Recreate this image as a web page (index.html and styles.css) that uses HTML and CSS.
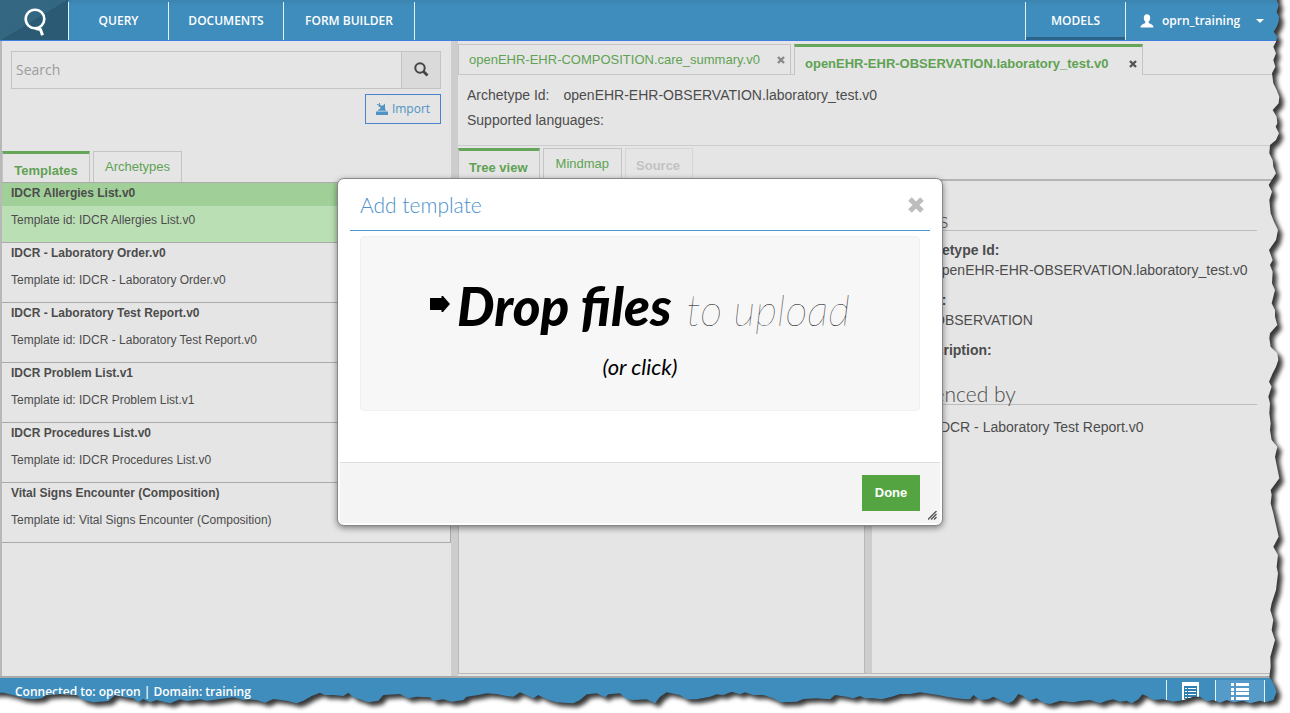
FILE: index.html
```html
<!DOCTYPE html>
<html lang="en">
<head>
<meta charset="utf-8">
<title>Models</title>
<link rel="stylesheet" href="styles.css">
</head>
<body>
<div class="app">
  <header class="topbar">
    <a class="logo" href="#" aria-label="Home">
      <svg width="24" height="30" viewBox="0 0 24 30" fill="none" stroke="#fff" stroke-width="2.6"><circle cx="12" cy="12" r="9.3"/><path d="M12.500 21.500 17.500 22.500 19.500 28.300" stroke-width="3"/></svg>
    </a>
    <nav class="nav">
      <a class="nav-item nav-query" href="#">QUERY</a>
      <a class="nav-item nav-docs" href="#">DOCUMENTS</a>
      <a class="nav-item nav-forms" href="#">FORM BUILDER</a>
    </nav>
    <a class="nav-models" href="#">MODELS</a>
    <button class="user" type="button">
      <svg width="14" height="14" viewBox="0 0 14 14" fill="#fff"><path d="M7 .3c2 0 3.200 1.400 3.200 3.400 0 1.600-.6 3-1.500 3.900v1.200c.3 1 4.800 1.500 4.800 4.700H.5c0-3.200 4.500-3.700 4.800-4.700V7.600C4.400 6.700 3.800 5.300 3.800 3.700 3.800 1.700 5 .3 7 .3z"/></svg>
      <span>oprn_training</span>
      <svg class="caret" width="8" height="4" viewBox="0 0 8 4" fill="#fff"><path d="M0 0h8L4 4z"/></svg>
    </button>
  </header>

  <main class="main">
    <section class="side">
      <form class="search">
        <input class="search-input" type="text" placeholder="Search" aria-label="Search">
        <button class="search-button" type="button" aria-label="Search">
          <svg width="15" height="15" viewBox="0 0 15 15" fill="none" stroke="#444"><circle cx="6" cy="6" r="4.700" stroke-width="2"/><path d="M9.500 9.500l4 4" stroke-width="2.800"/></svg>
        </button>
      </form>
      <button class="import" type="button">
        <svg width="12" height="12" viewBox="0 0 12 12" fill="#4e93c4"><path d="M0 8.600h12V12H0zM2 6.600h8v1.200H2zM9 .4V6.500H3L5 4.700 2.600 3.600 2.200 1.600 3.600.8 5 2.800 7 2.600z"/><path d="M1 1h1v1H1zM3 0h1v1H3z"/></svg>
        <span>Import</span>
      </button>
      <div class="tabs side-tabs">
        <button class="tab tab-active" type="button">Templates</button>
        <button class="tab" type="button">Archetypes</button>
      </div>
      <ul class="templates">
        <li class="template selected"><h3>IDCR Allergies List.v0</h3><p>Template id: IDCR Allergies List.v0</p></li>
        <li class="template"><h3>IDCR - Laboratory Order.v0</h3><p>Template id: IDCR - Laboratory Order.v0</p></li>
        <li class="template"><h3>IDCR - Laboratory Test Report.v0</h3><p>Template id: IDCR - Laboratory Test Report.v0</p></li>
        <li class="template"><h3>IDCR Problem List.v1</h3><p>Template id: IDCR Problem List.v1</p></li>
        <li class="template"><h3>IDCR Procedures List.v0</h3><p>Template id: IDCR Procedures List.v0</p></li>
        <li class="template"><h3>Vital Signs Encounter (Composition)</h3><p>Template id: Vital Signs Encounter (Composition)</p></li>
      </ul>
    </section>

    <section class="work">
      <div class="tabs doc-tabs">
        <button class="tab doc-tab" type="button"><span>openEHR-EHR-COMPOSITION.care_summary.v0</span>
          <svg class="x" width="8" height="8" viewBox="0 0 8 8" stroke="#888" stroke-width="2.400"><path d="M1 1l6 6M7 1L1 7"/></svg></button>
        <button class="tab doc-tab tab-active" type="button"><span>openEHR-EHR-OBSERVATION.laboratory_test.v0</span>
          <svg class="x" width="8" height="8" viewBox="0 0 8 8" stroke="#555" stroke-width="2.400"><path d="M1 1l6 6M7 1L1 7"/></svg></button>
      </div>
      <dl class="info">
        <div><dt>Archetype Id:</dt><dd>openEHR-EHR-OBSERVATION.laboratory_test.v0</dd></div>
        <div><dt>Supported languages:</dt><dd></dd></div>
      </dl>
      <div class="tabs view-tabs">
        <button class="tab tab-active" type="button">Tree view</button>
        <button class="tab" type="button">Mindmap</button>
        <button class="tab tab-disabled" type="button" disabled>Source</button>
      </div>
      <div class="panes">
        <div class="tree"></div>
        <div class="details">
          <h2>Details</h2>
          <dl>
            <dt>Archetype Id:</dt><dd>openEHR-EHR-OBSERVATION.laboratory_test.v0</dd>
            <dt>Type:</dt><dd>OBSERVATION</dd>
            <dt>Description:</dt>
          </dl>
          <h2>Referenced by</h2>
          <p class="reference">IDCR - Laboratory Test Report.v0</p>
        </div>
      </div>
    </section>
  </main>

  <footer class="status">
    <span class="status-text">Connected to: operon | Domain: training</span>
    <button class="status-button" type="button" aria-label="Form view">
      <svg width="18" height="20" viewBox="0 0 18 20"><path fill="#fff" d="M0 0h17v19H0z"/><path fill="#2f7fae" d="M2 4h13v13H2z"/><path fill="#fff" d="M3 6h2v1H3zm3 0h8v1H6zM3 9h2v1H3zm3 0h8v1H6zM3 12h2v1H3zm3 0h8v1H6zM3 15h2v1H3zm3 0h8v1H6z"/></svg>
    </button>
    <button class="status-button status-on" type="button" aria-label="List view">
      <svg width="18" height="20" viewBox="0 0 18 20" fill="#fff"><path d="M0 1h3v3H0zm5 0h13v3H5zM0 6h3v3H0zm5 0h13v3H5zM0 10h3v3H0zm5 0h13v3H5zM0 15h3v3H0zm5 0h13v3H5z"/></svg>
    </button>
  </footer>

  <div class="overlay">
    <div class="modal" role="dialog" aria-labelledby="modal-title">
      <div class="modal-head">
        <h1 id="modal-title">Add template</h1>
        <button class="close" type="button" aria-label="Close">
          <svg width="16" height="16" viewBox="0 0 16 16" stroke="#bdbdbd" stroke-width="5"><path d="M2 2l12 12M14 2L2 14"/></svg>
        </button>
      </div>
      <button class="dropzone" type="button">
        <span class="drop-line">
          <svg class="arrow" width="20" height="16" viewBox="0 0 20 16"><path d="M0 2h11.500V0h1.500l7 8-7 8h-1.500v-2H0z"/></svg>
          <span class="drop-strong">Drop files</span>
          <span class="drop-thin">to upload</span>
        </span>
        <span class="drop-click">(or click)</span>
      </button>
      <div class="modal-foot">
        <button class="done" type="button">Done</button>
        <svg class="grip" width="9" height="9" viewBox="0 0 9 9" stroke="#555" stroke-width="1.400"><path d="M0 8.500L8.500 0M3 8.500L8.500 3M6 8.500L8.500 6"/></svg>
      </div>
    </div>
  </div>

  <svg class="torn" viewBox="0 0 3870 2139" preserveAspectRatio="none" aria-hidden="true">
    <defs>
      <path id="sheet" d="M-100-100L3830-100 3830 0 3836 15 3830 35 3837 50 3836 65 3830 80 3821 95 3832 110 3828 125 3820 140 3828 160 3820 180 3826 200 3816 220 3820 250 3830 270 3838 290 3836 310 3818 330 3830 350 3832 370 3827 380 3837 400 3828 420 3810 435 3808 460 3818 480 3820 500 3828 520 3815 540 3806 555 3816 575 3808 600 3812 640 3822 665 3834 690 3828 720 3807 750 3818 780 3810 795 3818 815 3816 850 3825 870 3815 910 3825 930 3825 950 3832 975 3810 1000 3808 1015 3812 1040 3832 1060 3835 1080 3828 1100 3818 1120 3807 1145 3815 1160 3805 1190 3810 1210 3808 1240 3812 1270 3810 1290 3815 1320 3832 1340 3825 1370 3830 1395 3838 1435 3812 1470 3815 1485 3812 1510 3820 1540 3828 1575 3836 1610 3820 1640 3834 1665 3830 1700 3834 1720 3828 1770 3815 1810 3811 1830 3820 1860 3815 1890 3825 1920 3811 1970 3812 2000 3808 2030 3820 2050 3830 2075 3820 2100 3795 2107 3780 2102 3750 2110 3730 2102 3700 2107 3680 2100 3660 2108 3640 2100 3620 2104 3600 2090 3580 2090 3550 2100 3520 2105 3490 2098 3460 2100 3440 2088 3427 2083 3415 2098 3395 2110 3380 2102 3360 2105 3340 2098 3320 2102 3300 2110 3270 2100 3240 2103 3220 2107 3180 2102 3150 2112 3130 2108 3110 2095 3085 2102 3070 2088 3055 2082 3040 2102 3025 2110 3000 2100 2980 2090 2965 2098 2940 2100 2920 2085 2910 2098 2890 2097 2870 2095 2840 2090 2815 2085 2780 2080 2760 2077 2730 2082 2700 2082 2675 2090 2645 2098 2620 2095 2595 2095 2580 2088 2560 2095 2540 2090 2505 2085 2490 2098 2450 2095 2410 2097 2390 2105 2340 2107 2320 2095 2290 2085 2260 2085 2235 2077 2220 2083 2195 2075 2170 2085 2150 2083 2130 2090 2090 2098 2060 2098 2040 2085 2000 2077 1980 2090 1965 2110 1940 2098 1900 2100 1880 2098 1860 2080 1825 2083 1815 2092 1790 2080 1760 2083 1740 2100 1720 2110 1670 2107 1640 2098 1615 2085 1600 2095 1560 2077 1540 2090 1520 2088 1490 2082 1460 2080 1435 2085 1400 2090 1390 2100 1355 2105 1330 2098 1300 2102 1290 2092 1250 2090 1225 2095 1200 2082 1150 2085 1135 2102 1105 2107 1080 2098 1060 2092 1045 2078 1030 2088 1000 2085 975 2085 960 2078 935 2088 910 2102 890 2110 860 2102 820 2097 795 2108 770 2100 745 2098 730 2100 700 2092 640 2100 620 2102 600 2098 560 2103 540 2098 510 2110 470 2100 450 2107 430 2097 415 2107 400 2095 375 2092 345 2085 325 2103 280 2107 250 2100 230 2085 180 2082 140 2085 125 2095 100 2098 70 2095 40 2085 10 2078-100 2078z"/>
      <mask id="outside"><path fill="#fff" d="M0 0h3870v2139H0z"/><use href="#sheet" fill="#000"/></mask>
      <filter id="soft" x="-5%" y="-5%" width="110%" height="110%"><feGaussianBlur stdDeviation="7"/></filter>
    </defs>
    <g mask="url(#outside)">
      <path fill="#fff" d="M0 0h3870v2139H0z"/>
      <use href="#sheet" fill="#000" fill-opacity=".78" filter="url(#soft)" transform="translate(13 12)"/>
    </g>
  </svg>
</div>
</body>
</html>
```

FILE: styles.css
```css
* { box-sizing: border-box; }
body {
  margin: 0;
  background: #fff;
  color: #4c4c4c;
  font: 14px/20px "Liberation Sans", Arial, sans-serif;
}
h1, h2, h3, p, dl, dd, ul { margin: 0; padding: 0; }
button, input { font: inherit; border-radius: 0; }
a { text-decoration: none; }

.app {
  position: relative;
  display: flex;
  flex-direction: column;
  min-height: 100vh;
  overflow: hidden;
  background: #e5e5e5;
}

/* Top bar */
.topbar {
  display: flex;
  height: 41px;
  background: linear-gradient(#3a84b0, #3f8dbc 6px);
  border-bottom: 1px solid #3c7fe0;
  font: 600 12px/40px "Open Sans", sans-serif;
}
.logo {
  display: flex;
  align-items: center;
  justify-content: center;
  width: 68px;
  padding: 3px 0 0 1px;
  background: linear-gradient(149deg, #336782 50%, #2b5a74 50%);
}
.nav { display: flex; flex: 1; }
.nav-item, .nav-models {
  margin-top: 2px;
  line-height: 37px;
  color: #fff;
  text-align: center;
}
.nav-item { border-right: 1px solid #e4eff6; }
.nav-query { width: 101px; border-left: 1px solid #e4eff6; }
.nav-docs { width: 115px; }
.nav-forms { width: 131px; }
.nav-models {
  width: 101px;
  border: solid #e4eff6;
  border-width: 0 1px;
  box-shadow: inset 0 -3px #2b6488;
}
.user {
  display: flex;
  align-items: center;
  gap: 8px;
  width: 164px;
  padding: 1px 0 0 14px;
  border: 0;
  background: none;
  color: #fff;
}
.caret { margin-left: 8px; }

/* Layout */
.main { display: flex; flex: 1; border-bottom: 2px solid #aaa; }
.side {
  display: flex;
  flex-direction: column;
  width: 451px;
  border-left: 2px solid #b8b8b8;
}
.work {
  display: flex;
  flex-direction: column;
  flex: 1;
  min-width: 0;
  padding-bottom: 2px;
  border-left: 7px solid #cdcdcd;
}

/* Search */
.search { display: flex; margin: 10px 10px 0 9px; height: 38px; }
.search-input {
  flex: 1;
  padding: 0 4px;
  border: 1px solid #c4c4c4;
  background: #e5e5e5;
  font-family: "Open Sans", sans-serif;
}
.search-input::placeholder { color: #9c9c9c; }
.search-button {
  width: 39px;
  padding: 3px 0 0;
  border: 1px solid #c4c4c4;
  border-left: 0;
  background: #dadada;
}
.import {
  display: flex;
  align-items: center;
  align-self: flex-end;
  justify-content: center;
  gap: 4px;
  width: 76px;
  height: 30px;
  margin: 5px 10px 27px 0;
  padding: 0;
  border: 1px solid #4a82cc;
  background: none;
  color: #4e93c4;
  font: 12px/20px "Open Sans", sans-serif;
}

/* Tabs */
.tabs { display: flex; gap: 3px; }
.tab {
  height: 30px;
  padding: 0 10px;
  border: 1px solid #c4c4c4;
  border-bottom: 0;
  background: none;
  color: #5fa253;
  font-size: 13px;
  white-space: nowrap;
}
.tab-active {
  padding-top: 5px;
  border-top: 3px solid #66a65b;
  font-weight: bold;
}
.tab-disabled { padding-top: 3px; border-color: #d6d6d6; color: #c2c2c2; font-weight: bold; }
.side-tabs .tab { width: 89px; height: 31px; padding-right: 0; padding-left: 0; }
.side-tabs .tab-active { width: 88px; }
.doc-tabs { padding-top: 3px; border-bottom: 1px solid #c8c8c8; }
.doc-tab { display: flex; align-items: center; justify-content: space-between; width: 333px; }
.doc-tab.tab-active {
  width: 349px;
  height: 31px;
  margin-bottom: -1px;
  background: #e5e5e5;
}
.doc-tab .x { flex: none; margin-right: -5px; }

/* Template list */
.templates { list-style: none; border: 1px solid #aaa; border-left: 0; border-bottom: 0; font-size: 12px; }
.template { height: 60px; border-bottom: 1px solid #aaa; }
.template h3 { padding: 0 9px 3px; font-size: 12px; line-height: 20px; }
.template p { padding: 4px 9px; }
.selected { background: #bbdfb5; }
.selected h3 { background: #a0d097; }

/* Work area */
.info { display: flex; flex-direction: column; gap: 5px; padding: 10px 9px 15px; border-bottom: 1px solid #ccc; }
.info div { display: flex; gap: 14px; }
.view-tabs { padding-top: 2px; border-bottom: 2px solid #b4b4b4; }
.view-tabs .tab { height: 31px; padding-right: 12px; padding-left: 12px; }
.view-tabs .tab-active { padding-right: 11px; padding-left: 10px; }
.view-tabs .tab-disabled { padding-right: 12px; padding-left: 10px; }
.panes { display: flex; flex: 1; border-bottom: 1px solid #b8b8b8; }
.tree { width: 407px; border: solid #b8b8b8; border-width: 0 1px; }
.details {
  flex: 1;
  min-width: 0;
  padding: 29px 33px 0 14px;
  border-left: 7px solid #cdcdcd;
}
.details h2 {
  margin-bottom: 9px;
  border-bottom: 1px solid #bdbdbd;
  font: 300 21px/20px Lato, sans-serif;
}
.details dl { margin-bottom: 24px; padding-left: 24px; }
.details dt { font-weight: bold; }
.details dd { margin: 0 0 10px 24px; }
.reference { margin-top: 12px; padding-left: 50px; }

/* Status bar */
.status {
  display: flex;
  height: 35px;
  padding: 2px 25px 0 15px;
  background: #3f8dbc;
  color: #fff;
  font: 600 12px/23px "Open Sans", sans-serif;
}
.status-text { flex: 1; }
.status-button {
  display: flex;
  align-items: flex-start;
  width: 49px;
  padding: 2px 0 0;
  border: 0;
  border-left: 1px solid #e4eff6;
  background: none;
}
.status-button svg { margin: 0 auto; }
.status-on { width: 50px; border-right: 1px solid #e4eff6; background: #559bca; }

/* Modal */
.overlay {
  position: absolute;
  inset: 0;
  display: flex;
  align-items: flex-start;
  justify-content: center;
  padding: 178px 10px 0 0;
}
.modal {
  width: 606px;
  padding: 0 2px 2px;
  border: 1px solid #888;
  border-radius: 7px;
  background: #fff;
  box-shadow: 0 2px 6px rgba(0, 0, 0, .45);
}
.modal-head {
  display: flex;
  align-items: center;
  justify-content: space-between;
  height: 52px;
  margin: 0 10px 5px;
  padding: 0 6px 0 10px;
  border-bottom: 1px solid #4f97cf;
}
.modal-head h1 { color: #4a90cc; font: 300 21px/28px Lato, sans-serif; }
.close { padding: 0; border: 0; background: none; line-height: 0; }
.dropzone {
  display: flex;
  flex-direction: column;
  align-items: center;
  justify-content: flex-start;
  width: 560px;
  height: 175px;
  margin: 0 20px 51px;
  padding: 34px 0 0;
  border: 1px solid #f0f0f0;
  border-radius: 4px;
  background: #f7f7f7;
  color: #000;
  font-family: Lato, sans-serif;
  font-style: italic;
}
.drop-line { display: flex; align-items: baseline; margin-bottom: 2px; line-height: 70px; }
.arrow { align-self: center; margin: 0 7px 8px 0; }
.drop-strong { font-size: 53px; font-weight: 900; }
.drop-thin { margin-left: 15px; font-size: 43px; font-weight: 100; }
.drop-click { font-size: 22px; line-height: 40px; }
.modal-foot {
  position: relative;
  display: flex;
  justify-content: flex-end;
  padding: 12px 20px;
  border-top: 1px solid #ddd;
  background: #f4f4f4;
}
.done {
  width: 58px;
  height: 36px;
  padding: 0;
  border: 0;
  background: #54a542;
  color: #fff;
  font-size: 13px;
  font-weight: bold;
}
.grip { position: absolute; right: 3px; bottom: 3px; }

/* Ragged paper edge */
.torn {
  position: absolute;
  inset: 0;
  width: 100%;
  height: 100%;
  pointer-events: none;
}
```
